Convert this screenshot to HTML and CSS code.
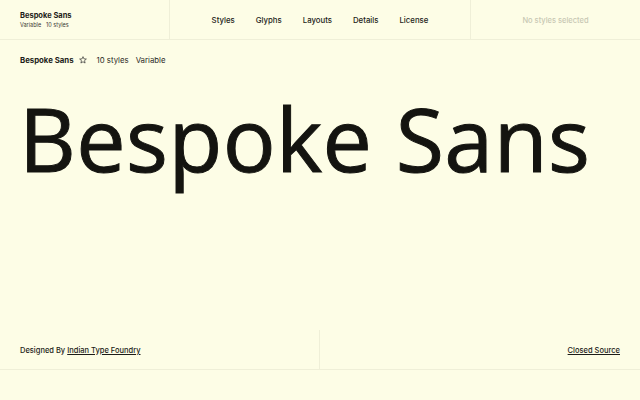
FILE: index.html
```html
<!DOCTYPE html>
<html>
<head>
<meta charset="utf-8">
<link rel="stylesheet" href="styles.css">
</head>
<body>
<div class="page">
  <header class="topbar">
    <div class="brand">
      <div class="brand-name">Bespoke Sans</div>
      <div class="brand-meta"><span>Variable</span><span>10 styles</span></div>
    </div>
    <nav class="nav">
      <a>Styles</a>
      <a>Glyphs</a>
      <a>Layouts</a>
      <a>Details</a>
      <a>License</a>
    </nav>
    <div class="selection">No styles selected</div>
  </header>
  <div class="info">
    <span class="info-name">Bespoke Sans</span>
    <svg class="star" viewBox="0 0 10 10" width="8" height="8"><path d="M5 0.8 L6.2 3.6 L9.2 3.8 L6.9 5.8 L7.6 8.8 L5 7.2 L2.4 8.8 L3.1 5.8 L0.8 3.8 L3.8 3.6 Z" fill="none" stroke="#333" stroke-width="0.9" stroke-linejoin="round"/></svg>
    <span class="info-item">10 styles</span>
    <span class="info-item">Variable</span>
  </div>
  <main class="hero">
    <div class="specimen">Bespoke Sans</div>
  </main>
  <footer class="footer">
    <div class="foot-left">Designed By <a>Indian Type Foundry</a></div>
    <div class="foot-right"><a>Closed Source</a></div>
  </footer>
  <div class="bottom"></div>
</div>
</body>
</html>
```
FILE: styles.css
```css
html, body {
  margin: 0;
  padding: 0;
  background: #fdfde6;
}
body {
  font-family: Inter, "Liberation Sans", sans-serif;
  color: #1c1c18;
}
.page {
  width: 640px;
  height: 400px;
  display: flex;
  flex-direction: column;
}
.topbar {
  display: grid;
  grid-template-columns: 170px 1fr 170px;
  height: 39px;
  border-bottom: 1px solid #efefd8;
}
.brand {
  display: flex;
  flex-direction: column;
  justify-content: center;
  padding-left: 20px;
  border-right: 1px solid #efefd8;
}
.brand-name {
  font-size: 7.5px;
  font-weight: 700;
  line-height: 10px;
}
.brand-meta {
  font-size: 5.5px;
  line-height: 8px;
  display: flex;
  gap: 5px;
  color: #3a3a34;
}
.nav {
  display: flex;
  justify-content: center;
  align-items: center;
  gap: 21px;
  font-size: 7.8px;
  font-weight: 500;
  padding-top: 1px;
}
.selection {
  border-left: 1px solid #efefd8;
  display: flex;
  align-items: center;
  justify-content: center;
  font-size: 7.5px;
  font-weight: 500;
  color: #c8c8b4;
  padding-top: 1px;
}
.info {
  height: 40px;
  display: flex;
  align-items: center;
  padding-left: 20px;
  font-size: 7.8px;
}
.info-name {
  font-weight: 700;
}
.star {
  margin-left: 5px;
  margin-right: 10px;
}
.info-item {
  margin-right: 7px;
  color: #2c2c26;
}
.hero {
  flex: 1;
  padding-top: 14px;
}
.specimen {
  font-family: "Open Sans", sans-serif;
  font-size: 88px;
  line-height: 88px;
  letter-spacing: 0.4px;
  padding-left: 19px;
  color: #141410;
  -webkit-text-stroke: 1px #141410;
  white-space: nowrap;
}
.footer {
  display: grid;
  grid-template-columns: 320px 320px;
  height: 39px;
  border-bottom: 1px solid #efefd8;
  font-size: 7.5px;
  font-weight: 500;
}
.foot-left {
  display: flex;
  align-items: center;
  padding-left: 20px;
  padding-top: 1px;
  border-right: 1px solid #efefd8;
  gap: 2px;
}
.foot-right {
  display: flex;
  align-items: center;
  justify-content: flex-end;
  padding-right: 20px;
  padding-top: 1px;
}
.footer a {
  text-decoration: underline;
}
.bottom {
  height: 30px;
}
```
